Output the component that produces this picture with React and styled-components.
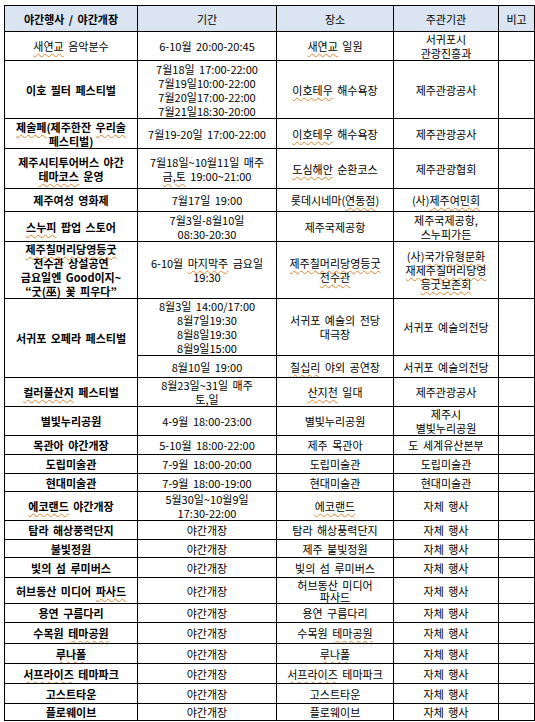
import React from 'react';
import styled, { createGlobalStyle } from 'styled-components';

const GlobalStyle = createGlobalStyle`
  body {
    margin: 0;
    background: #fff;
  }
`;

const Page = styled.div`
  padding: 5px 2px 0 4px;
  font-family: "Noto Sans CJK KR", "Noto Sans", sans-serif;
  font-size: 11px;
  color: #000;
`;

const Table = styled.table`
  border-collapse: collapse;
  table-layout: fixed;
  width: 530px;
`;

const Row = styled.tr`
  height: ${p => p.$h}px;
`;

const Head = styled.th`
  background: #dbe5f1;
  border: 1px solid #000;
  font-weight: ${p => (p.$bold ? 700 : 400)};
  text-align: center;
  vertical-align: middle;
  padding: 0 2px;
  line-height: 14px;
  word-spacing: 2px;
  white-space: nowrap;
`;

const Cell = styled.td`
  border: 1px solid #000;
  text-align: center;
  vertical-align: middle;
  padding: 0 2px;
  line-height: ${p => p.$lh || 14}px;
  word-spacing: 2px;
  font-weight: ${p => (p.$bold ? 700 : 400)};
  white-space: nowrap;
  overflow: hidden;
`;

const Wavy = styled.span`
  text-decoration: underline wavy #e2852e;
  text-decoration-thickness: 1px;
  text-underline-offset: 2px;
`;

// [단어] 표시는 맞춤법 물결 밑줄
const renderLine = (line) =>
  line.split(/(\[[^\]]+\])/).map((part, i) =>
    part.startsWith('[') ? <Wavy key={i}>{part.slice(1, -1)}</Wavy> : part
  );

const Text = ({ value }) => {
  const lines = value.split('\n');
  return lines.map((line, i) => (
    <React.Fragment key={i}>
      {renderLine(line)}
      {i < lines.length - 1 && <br />}
    </React.Fragment>
  ));
};

const rows = [
  { h: 29, light: true, name: '[새연교] 음악분수', period: '6-10월 20:00-20:45', place: '[새연교] 일원', org: '서귀포시\n[관광진흥과]' },
  { h: 58, name: '이호 필터 페스티벌', period: '7월18일 17:00-22:00\n7월19일10:00-22:00\n7월20일17:00-22:00\n7월21일18:30-20:00', place: '[이호테우] 해수욕장', org: '제주관광공사' },
  { h: 30, name: '[제술페](제주한잔 [우리술]\n페스티벌)', period: '7월19-20일 17:00-22:00', place: '[이호테우] 해수욕장', org: '제주관광공사' },
  { h: 40, name: '제주시티투어버스 야간\n[테마코스] 운영', period: '7월18일~10월11일 매주\n[금,토] 19:00~21:00', place: '[도심해안] 순환코스', org: '제주관광협회' },
  { h: 23, name: '제주여성 영화제', period: '7월17일 19:00', place: '롯데시네마([연동점])', org: '(사)[제주여민회]' },
  { h: 30, name: '[스누피] 팝업 스토어', period: '7월3일-8월10일\n08:30-20:30', place: '제주국제공항', org: '제주국제공항,\n[스누피가든]' },
  { h: 57, name: '[제주칠머리당영등굿]\n전수관 상설공연\n금요일엔 Good이지~\n“굿(巫) 꽃 피우다”', period: '6-10월 [마지막주] 금요일\n19:30', place: '[제주칠머리당영등굿]\n[전수관]', org: '(사)[국가유형문화]\n[재제주칠머리당영]\n[등굿보존회]' },
  {
    h: 57,
    name: '서귀포 오페라 페스티벌',
    period: '8월3일 14:00/17:00\n8월7일19:30\n8월8일19:30\n8월9일15:00',
    place: '서귀포 예술의 전당\n대극장',
    org: '서귀포 예술의전당',
    extra: { h: 22, period: '8월10일 19:00', place: '[칠십리] 야외 공연장', org: '서귀포 예술의전당' },
  },
  { h: 29, name: '[컬러풀산지] 페스티벌', period: '8월23일~31일 매주\n[토,일]', place: '[산지천] 일대', org: '제주관광공사' },
  { h: 29, name: '별빛누리공원', period: '4-9월 18:00-23:00', place: '별빛누리공원', org: '제주시\n별빛누리공원' },
  { h: 19, name: '목관아 야간개장', period: '5-10월 18:00-22:00', place: '제주 목관아', org: '도 세계유산본부' },
  { h: 19, name: '도립미술관', period: '7-9월 18:00-20:00', place: '도립미술관', org: '도립미술관' },
  { h: 18, name: '현대미술관', period: '7-9월 18:00-19:00', place: '현대미술관', org: '현대미술관' },
  { h: 29, name: '[에코랜드] 야간개장', period: '5월30일~10월9일\n17:30-22:00', place: '[에코랜드]', org: '자체 행사' },
  { h: 19, name: '탐라 해상풍력단지', period: '야간개장', place: '탐라 해상풍력단지', org: '자체 행사' },
  { h: 18, name: '불빛정원', period: '야간개장', place: '제주 불빛정원', org: '자체 행사' },
  { h: 20, name: '빛의 섬 루미버스', period: '야간개장', place: '빛의 섬 루미버스', org: '자체 행사' },
  { h: 26, lh: 12, name: '허브동산 미디어 [파사드]', period: '야간개장', place: '허브동산 미디어\n[파사드]', org: '자체 행사' },
  { h: 19, name: '용연 구름다리', period: '야간개장', place: '용연 구름다리', org: '자체 행사' },
  { h: 21, name: '수목원 [테마공원]', period: '야간개장', place: '수목원 [테마공원]', org: '자체 행사' },
  { h: 20, name: '[루나폴]', period: '야간개장', place: '[루나폴]', org: '자체 행사' },
  { h: 20, name: '[서프라이즈] 테마파크', period: '야간개장', place: '[서프라이즈] 테마파크', org: '자체 행사' },
  { h: 20, name: '고스트타운', period: '야간개장', place: '고스트타운', org: '자체 행사' },
  { h: 17, name: '플로웨이브', period: '야간개장', place: '플로웨이브', org: '자체 행사' },
];

const App = () => (
  <Page>
    <GlobalStyle />
    <Table>
      <colgroup>
        <col style={{ width: 133 }} />
        <col style={{ width: 139 }} />
        <col style={{ width: 117 }} />
        <col style={{ width: 105 }} />
        <col style={{ width: 36 }} />
      </colgroup>
      <thead>
        <Row $h={26}>
          <Head $bold>야간행사 / 야간개장</Head>
          <Head>기간</Head>
          <Head>장소</Head>
          <Head>주관기관</Head>
          <Head>비고</Head>
        </Row>
      </thead>
      <tbody>
        {rows.map((row, i) => (
          <React.Fragment key={i}>
            <Row $h={row.h}>
              <Cell $bold={!row.light} $lh={row.lh} rowSpan={row.extra ? 2 : 1}>
                <Text value={row.name} />
              </Cell>
              <Cell $lh={row.lh}><Text value={row.period} /></Cell>
              <Cell $lh={row.lh}><Text value={row.place} /></Cell>
              <Cell $lh={row.lh}><Text value={row.org} /></Cell>
              <Cell />
            </Row>
            {row.extra && (
              <Row $h={row.extra.h}>
                <Cell><Text value={row.extra.period} /></Cell>
                <Cell><Text value={row.extra.place} /></Cell>
                <Cell><Text value={row.extra.org} /></Cell>
                <Cell />
              </Row>
            )}
          </React.Fragment>
        ))}
      </tbody>
    </Table>
  </Page>
);

export default App;
